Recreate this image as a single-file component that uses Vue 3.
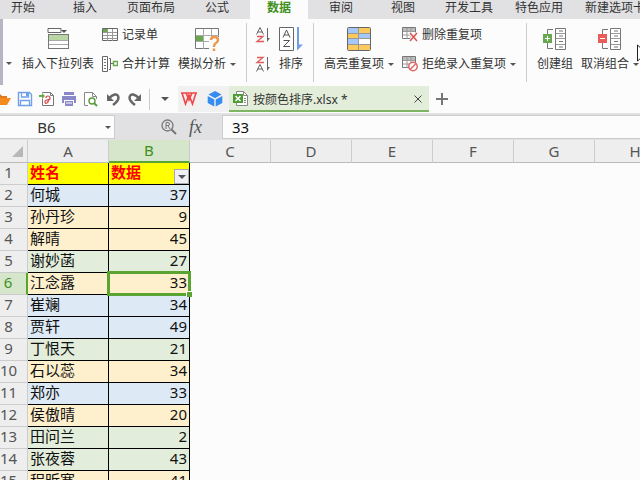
<script setup>
import { ref } from 'vue'

const tabs = ['开始', '插入', '页面布局', '公式', '数据', '审阅', '视图', '开发工具', '特色应用', '新建选项卡']
const activeTab = ref('数据')
const nameBox = ref('B6')
const formula = ref('33')
const extraColumns = ['C', 'D', 'E', 'F', 'G', 'H']
const rows = [
  { name: '何城', value: 37, tone: 'blue' },
  { name: '孙丹珍', value: 9, tone: 'amber' },
  { name: '解晴', value: 45, tone: 'amber' },
  { name: '谢妙菡', value: 27, tone: 'green' },
  { name: '江念露', value: 33, tone: 'amber' },
  { name: '崔斓', value: 34, tone: 'blue' },
  { name: '贾轩', value: 49, tone: 'blue' },
  { name: '丁恨天', value: 21, tone: 'green' },
  { name: '石以蕊', value: 34, tone: 'amber' },
  { name: '郑亦', value: 33, tone: 'blue' },
  { name: '侯傲晴', value: 20, tone: 'amber' },
  { name: '田问兰', value: 2, tone: 'green' },
  { name: '张夜蓉', value: 43, tone: 'green' },
  { name: '程昕寒', value: 41, tone: 'amber' },
]
const activeRow = 6
</script>

<template>
  <div class="app">
    <nav class="tabs">
      <button v-for="t in tabs" :key="t" class="tab" :class="{ active: t === activeTab }" @click="activeTab = t">{{ t }}</button>
    </nav>

    <section class="ribbon">
      <button class="more" aria-label="更多"><i class="caret"></i></button>

      <button class="big first">
        <svg width="22" height="24" viewBox="0 0 22 24">
          <path d="M1 1.5h13v4h-13z" fill="#fff" stroke="#666" />
          <path d="M14 3h6l-3 3z" fill="#555" />
          <rect x="1.5" y="7.500" width="20" height="14" fill="#fff" stroke="#777" />
          <path d="M2 8h19v5h-19z" fill="#b9d7a4" />
          <path d="M2 13.500h19M2 17.500h19" stroke="#aaa" />
        </svg>
        <span>插入下拉列表</span>
      </button>

      <div class="stack">
        <button class="small">
          <svg width="16" height="16" viewBox="0 0 16 16">
            <path d="M.5 1.500h15v12h-15z" fill="#fff" stroke="#666" />
            <path d="M1 2h5v3h-5z" fill="#6aa84f" />
            <path d="M1 5.500h14M1 8.500h14M1 11.500h14M5.500 2v12M10.500 2v12" stroke="#999" />
          </svg>
          <span>记录单</span>
        </button>
        <button class="small">
          <svg width="16" height="16" viewBox="0 0 16 16">
            <path d="M.5.500h5v15h-5z" fill="#fff" stroke="#666" />
            <path d="M2 3.500h2M2 6.500h2M2 9.500h2M2 12.500h2" stroke="#777" />
            <path d="M7 2.500h1.500v11H7M9 7.500h2" fill="none" stroke="#666" />
            <path d="M11.500 5.500h4v4h-4z" fill="#fff" stroke="#6aa84f" stroke-width="1.500" />
          </svg>
          <span>合并计算</span>
        </button>
      </div>

      <button class="big">
        <svg width="26" height="24" viewBox="0 0 26 24">
          <path d="M1.500 1.500h23v20h-23z" fill="#fff" stroke="#777" />
          <path d="M9.500 2v20M17.500 2v8M2 8.500h23M2 14.500h14" stroke="#aaa" />
          <path d="M2 9h7v5H2z" fill="#6aa84f" />
          <path d="M15 10h11v14H15z" fill="#fcfcfc" />
          <path d="M17 13q0-3 3.500-3t3.500 3q0 2-2 3t-2 4M20 21.500v2.500" fill="none" stroke="#eb9a50" stroke-width="2.500" />
        </svg>
        <span>模拟分析<i class="caret"></i></span>
      </button>

      <i class="divider"></i>

      <div class="stack sorts">
        <button class="small" aria-label="升序">
          <svg width="16" height="16" viewBox="0 0 16 16">
            <path d="M1.500 7.500 5 .5l3.500 7M2.500 5h5" fill="none" stroke="#666" />
            <path d="M2 9.500h6L2 14.500h7" fill="none" stroke="#e05a5a" stroke-width="1.300" />
            <path d="M12.500 1v13" stroke="#666" /><path d="M12 11h3l-3 4z" fill="#666" />
          </svg>
        </button>
        <button class="small" aria-label="降序">
          <svg width="16" height="16" viewBox="0 0 16 16">
            <path d="M2 1.500h6L2 6.500h7" fill="none" stroke="#e05a5a" stroke-width="1.300" />
            <path d="M1.500 15.500 5 8.500l3.500 7M2.500 13h5" fill="none" stroke="#666" />
            <path d="M12.500 1v13" stroke="#666" /><path d="M12 11h3l-3 4z" fill="#666" />
          </svg>
        </button>
      </div>

      <button class="big">
        <svg width="24" height="26" viewBox="0 0 24 26">
          <path d="M.5 1.500h14v23H.5z" fill="#fff" stroke="#666" />
          <path d="M4 11.500 7.500 4l3.500 7.500M5 9h5M4.500 14.500h6l-6 6h6.500" fill="none" stroke="#555" />
          <path d="M19 1v22" stroke="#6f9fe8" stroke-width="2" /><path d="M18 18.500h6l-6 6z" fill="#6f9fe8" />
        </svg>
        <span>排序</span>
      </button>

      <i class="divider"></i>

      <button class="big">
        <svg width="24" height="24" viewBox="0 0 24 24">
          <path d="M1 1h22v22H1z" fill="#a5c7fa" />
          <path d="M12 1h11v6H12zM1 7h11v5H1zM1 17h11v6H1zM12 17h11v6H12z" fill="#fcc95b" />
          <path d="M12 12h11v5H12z" fill="#fff" />
          <path d="M1 6.500h22M1 11.500h22M1 17.500h22M11.500 1v22" stroke="#999" />
          <rect x=".5" y=".5" width="23" height="23" rx="1" fill="none" stroke="#666" />
        </svg>
        <span>高亮重复项<i class="caret"></i></span>
      </button>

      <div class="stack">
        <button class="small">
          <svg width="16" height="16" viewBox="0 0 16 16">
            <path d="M.5.500h13v11H.5z" fill="#fff" stroke="#777" />
            <path d="M1 1h12v3H1z" fill="#bbb" /><path d="M1 4.500h12M1 8h12M5 1v11M9 1v11" stroke="#999" />
            <path d="M8 6l7 8M15 6l-7 8" stroke="#fff" stroke-width="3" />
            <path d="M8 6l7 8M15 6l-7 8" stroke="#d9534f" stroke-width="1.500" />
          </svg>
          <span>删除重复项</span>
        </button>
        <button class="small">
          <svg width="16" height="16" viewBox="0 0 16 16">
            <path d="M.5.500h13v11H.5z" fill="#fff" stroke="#777" />
            <path d="M1 1h12v3H1z" fill="#bbb" /><path d="M1 4.500h12M1 8h12M5 1v11M9 1v11" stroke="#999" />
            <circle cx="11" cy="10.500" r="4.200" fill="#fff" stroke="#e06666" stroke-width="1.500" />
            <path d="M8 13.500l6-6" stroke="#e06666" stroke-width="1.500" />
          </svg>
          <span>拒绝录入重复项<i class="caret"></i></span>
        </button>
      </div>

      <i class="divider"></i>

      <button class="big">
        <svg width="24" height="24" viewBox="0 0 24 24">
          <path d="M10 2.500H4.500v19H10" fill="none" stroke="#777" />
          <path d="M12.500 1.500h10v21h-10z" fill="#fff" stroke="#777" />
          <path d="M13 6.500h9M13 11.500h9M13 17.500h9" stroke="#999" />
          <path d="M16 4h4M16 9h4M16 14.500h4M16 20h4" stroke="#777" />
          <path d="M0 7h9v9H0z" fill="#6aa84f" /><path d="M2 11.500h5M4.500 9v5" stroke="#fff" />
        </svg>
        <span>创建组</span>
      </button>

      <button class="big">
        <svg width="24" height="24" viewBox="0 0 24 24">
          <path d="M10 2.500H4.500v19H10" fill="none" stroke="#777" />
          <path d="M12.500 1.500h10v21h-10z" fill="#fff" stroke="#777" />
          <path d="M13 6.500h9M13 11.500h9M13 17.500h9" stroke="#999" />
          <path d="M16 4h4M16 9h4M16 14.500h4M16 20h4" stroke="#777" />
          <path d="M0 7h9v9H0z" fill="#e85c5c" /><path d="M2 11.500h5" stroke="#fff" />
        </svg>
        <span>取消组合<i class="caret"></i></span>
      </button>

      <svg class="pointer" width="14" height="22" viewBox="0 0 14 22">
        <path d="M1.500 1v16l4-3.500 3 7 3-1-3-7h5z" fill="#fff" stroke="#222" />
      </svg>
    </section>

    <section class="quick">
      <button class="tool open" aria-label="打开">
        <svg width="16" height="16" viewBox="0 0 16 16">
          <path d="M0 3h5l2 2h5v3H4l-3 6H0z" fill="#e07a1c" /><path d="M4 7h12l-4 7H1z" fill="#f58a1f" />
        </svg>
      </button>
      <button class="tool" aria-label="保存">
        <svg width="16" height="16" viewBox="0 0 16 16">
          <path d="M1.500 1.500h11l2 2v11h-13z" fill="#fff" stroke="#6f9fe8" stroke-width="1.400" />
          <path d="M4.500 2v4h7V2M3.500 14V9.500h9V14" fill="none" stroke="#6f9fe8" stroke-width="1.300" />
          <path d="M9 2h2v3H9z" fill="#6f9fe8" />
        </svg>
      </button>
      <button class="tool" aria-label="输出为PDF">
        <svg width="16" height="16" viewBox="0 0 16 16">
          <path d="M3.500 1.500h8l3 3v10h-11z" fill="#fff" stroke="#777" />
          <path d="M11.500 1.500v3h3" fill="none" stroke="#777" />
          <path d="M7 7q0-2 2-2t2 2-2 2H8q-2 0-2 2t2 1 1-4" fill="none" stroke="#d94545" stroke-width="1.200" />
          <path d="M0 2h6v6H0z" fill="#fcfcfc" /><path d="M0 4h3V2l3 3-3 3V6H0z" fill="#6aa84f" />
        </svg>
      </button>
      <button class="tool" aria-label="打印">
        <svg width="16" height="16" viewBox="0 0 16 16">
          <path d="M3 1h10v3H3zM1 5h14v7h-2V9H3v3H1z" fill="#8a87cb" />
          <path d="M4 10h8v5H4z" fill="#8a87cb" /><path d="M5 12h6" stroke="#fff" />
        </svg>
      </button>
      <button class="tool" aria-label="打印预览">
        <svg width="16" height="16" viewBox="0 0 16 16">
          <path d="M1.500 1.500h8l4 4v9h-12z" fill="#fff" stroke="#888" /><path d="M9.500 1.500v4h4" fill="none" stroke="#888" />
          <path d="M5 8h10v7H5z" fill="#fff" />
          <circle cx="9" cy="10" r="3" fill="#fff" stroke="#5a9e3c" stroke-width="1.400" /><path d="M11 12l3 3" stroke="#5a9e3c" stroke-width="2" />
        </svg>
      </button>
      <button class="tool" aria-label="撤销">
        <svg width="16" height="16" viewBox="0 0 16 16">
          <path d="M4 7q7-6 9-2t-5 9" fill="none" stroke="#666" stroke-width="2.500" /><path d="M2 3v7h7z" fill="#666" />
        </svg>
      </button>
      <button class="tool" aria-label="恢复">
        <svg width="16" height="16" viewBox="0 0 16 16">
          <path d="M12 7q-7-6-9-2t5 9" fill="none" stroke="#666" stroke-width="2.500" /><path d="M14 3v7H7z" fill="#666" />
        </svg>
      </button>
      <i class="rule"></i>
      <button class="drop" aria-label="自定义"><i class="caret large"></i></button>
      <div class="brand">
        <a href="#" aria-label="WPS">
          <svg width="16" height="14" viewBox="0 0 16 14">
            <path d="M0 1h16M1 1l3.500 11L8 3l3.500 9L15 1M5 1l3 7 3-7" fill="none" stroke="#f04848" stroke-width="1.600" />
          </svg>
        </a>
        <a href="#" aria-label="云空间">
          <svg width="16" height="16" viewBox="0 0 16 16">
            <path d="M8 0l6.500 3.500L8 7.200 1.500 3.500zM.7 5l6.600 3.600v7L.7 12zM15.300 5L8.700 8.600v7l6.600-3.600z" fill="#378cf0" />
          </svg>
        </a>
      </div>
      <div class="doc">
        <svg width="16" height="16" viewBox="0 0 16 16">
          <path d="M3.500.500h7l4 4v10h-11z" fill="#fff" stroke="#888" /><path d="M10.500.500v4h4M11 7.500h2M11 9.500h2M11 11.500h2" fill="none" stroke="#888" />
          <path d="M0 3h10v9H0z" fill="#4d9b35" /><path d="M2.500 5l5 5M7.500 5l-5 5" stroke="#fff" stroke-width="1.500" />
        </svg>
        <span class="title">按颜色排序.xlsx *</span>
        <button class="close" aria-label="关闭">
          <svg width="8" height="8" viewBox="0 0 8 8"><path d="M.5.500l7 7M7.500.500l-7 7" stroke="#444" /></svg>
        </button>
      </div>
      <button class="plus" aria-label="新建">
        <svg width="12" height="12" viewBox="0 0 12 12"><path d="M0 6h12M6 0v12" stroke="#777" stroke-width="2" /></svg>
      </button>
    </section>

    <section class="formula-bar">
      <div class="name-box">
        <input v-model="nameBox" aria-label="名称框" />
        <i class="caret"></i>
      </div>
      <div class="fx">
        <button aria-label="查找">
          <svg width="16" height="16" viewBox="0 0 16 16">
            <circle cx="6.500" cy="6.500" r="5.500" fill="none" stroke="#777" stroke-width="1.300" />
            <path d="M10.500 10.500l4.500 4.500" stroke="#777" stroke-width="2" />
            <path d="M5 10V3.500h2q1.500 0 1.500 1.500T7 6.500H5M7 6.500L9 10" fill="none" stroke="#777" />
          </svg>
        </button>
        <button class="fn">fx</button>
      </div>
      <input v-model="formula" class="formula" aria-label="编辑栏" />
    </section>

    <main class="sheet">
      <table>
        <thead>
          <tr>
            <th class="corner"><i></i></th>
            <th class="col">A</th>
            <th class="col selected">B</th>
            <th v-for="c in extraColumns" :key="c" class="col">{{ c }}</th>
          </tr>
        </thead>
        <tbody>
          <tr>
            <th class="num">1</th>
            <td class="cell head">姓名</td>
            <td class="cell head filter">数据<button aria-label="筛选"><i class="caret large"></i></button></td>
            <td :colspan="extraColumns.length"></td>
          </tr>
          <tr v-for="(r, i) in rows" :key="i">
            <th class="num" :class="{ selected: i + 2 === activeRow }">{{ i + 2 }}</th>
            <td class="cell" :class="r.tone">{{ r.name }}</td>
            <td class="cell value" :class="[r.tone, { current: i + 2 === activeRow }]">{{ r.value }}</td>
            <td :colspan="extraColumns.length"></td>
          </tr>
        </tbody>
      </table>
    </main>
  </div>
</template>

<style>
body {
  margin: 0;
  overflow: hidden;
}
</style>

<style scoped>
.app {
  display: flex;
  flex-direction: column;
  height: 100vh;
  overflow: hidden;
  background: #fcfcfc;
  color: #333;
  font: 12px/16px "Noto Sans", "Noto Sans CJK SC", sans-serif;
}
* {
  box-sizing: border-box;
}
button,
input {
  margin: 0;
  padding: 0;
  border: 0;
  background: none;
  color: inherit;
  font: inherit;
}
svg {
  display: block;
  flex: none;
}
.caret {
  display: inline-block;
  flex: none;
  border: 3px solid transparent;
  border-top-color: #555;
  border-bottom: 0;
}
.caret.large {
  border-width: 4px;
  border-bottom: 0;
}

.tabs {
  display: flex;
  flex: none;
  height: 19px;
  margin-left: -8px;
  background: #e1e1e3;
}
.tab {
  flex: none;
  min-width: 62px;
  padding: 0 11px 3px;
  white-space: nowrap;
}
.tab.active {
  min-width: 58px;
  margin: 0 2px;
  background: #fcfcfc;
  color: #3f9020;
  font-weight: 700;
}

.ribbon {
  position: relative;
  display: flex;
  flex: none;
  height: 66px;
  padding-top: 4px;
  border-left: 3px solid #b5b5c3;
}
.ribbon button {
  flex: none;
  white-space: nowrap;
}
.more {
  display: flex;
  align-items: center;
  width: 11px;
  height: 16px;
  margin-top: 32px;
  padding-left: 3px;
}
.big {
  display: flex;
  flex-direction: column;
  align-items: center;
  height: 48px;
  margin: 3px 0 0 8px;
}
.big svg {
  height: 26px;
  margin-bottom: 4px;
}
.big span,
.small span {
  display: flex;
  align-items: center;
}
.big .caret,
.small .caret {
  margin-left: 4px;
}
.stack {
  display: flex;
  flex: none;
  flex-direction: column;
  gap: 13px;
  margin: 4px 0 0 8px;
}
.small {
  display: flex;
  align-items: center;
  gap: 4px;
  height: 16px;
}
.divider {
  flex: none;
  width: 1px;
  height: 59px;
  margin-left: 10px;
  background: #ccc;
}
.divider + .big {
  margin-left: 10px;
}
.pointer {
  position: absolute;
  top: 25px;
  right: -10px;
}

.quick {
  display: flex;
  flex: none;
  align-items: center;
  height: 28px;
}
.tool {
  flex: none;
  margin-left: 6px;
}
.tool.open {
  margin-left: -5px;
}
.rule {
  flex: none;
  width: 1px;
  height: 21px;
  margin-left: 6px;
  background: #ccc;
}
.drop {
  display: flex;
  justify-content: center;
  width: 28px;
  padding-left: 2px;
}
.brand {
  display: flex;
  flex: none;
  align-items: center;
  gap: 10px;
  height: 26px;
  padding: 0 6px 0 3px;
  background: #f1f1f2;
}
.doc {
  display: flex;
  flex: 0 1 200px;
  align-items: center;
  height: 26px;
  padding: 1px 7px 0 4px;
  border-bottom: 2px solid #7db562;
  background: #e2eeda;
}
.title {
  flex: 1;
  padding: 2px 0 0 4px;
  white-space: nowrap;
}
.plus {
  margin-left: 7px;
}

.formula-bar {
  display: flex;
  flex: none;
  height: 27px;
  padding: 2px 0 1px;
  background: #e1e1e3;
}
.name-box {
  display: flex;
  flex: none;
  align-items: center;
  width: 115px;
  padding-right: 3px;
  border: 1px solid #ccc;
  border-left: 0;
  background: #fcfcfc;
}
.name-box input {
  flex: 1;
  min-width: 0;
  padding-right: 12px;
  font-size: 15px;
  text-align: center;
}
.fx {
  display: flex;
  flex: none;
  align-items: center;
  justify-content: flex-end;
  gap: 12px;
  width: 107px;
  padding-right: 20px;
}
.fn {
  color: #555;
  font: italic 18px/20px "Liberation Serif", serif;
}
.formula {
  flex: 1;
  min-width: 0;
  padding-left: 9px;
  border: 1px solid #ccc;
  border-right: 0;
  background: #fcfcfc;
  color: #111;
  font-size: 15px;
}

.sheet {
  flex: 1;
  min-height: 0;
  overflow: hidden;
}
table {
  width: 676px;
  border-collapse: separate;
  border-spacing: 0;
  table-layout: fixed;
}
th,
td {
  height: 22px;
  padding: 0 0 2px;
  font-size: 15px;
  line-height: 19px;
  white-space: nowrap;
}
th {
  color: #555;
  font-weight: 400;
}
thead th {
  height: 23px;
  padding: 0;
  border-right: 1px solid #ccc;
  border-bottom: 1px solid #bbb;
  background: #eee;
}
.corner {
  width: 28px;
}
.corner i {
  display: block;
  width: 0;
  margin-left: 12px;
  border-bottom: 11px solid #b8b8b8;
  border-left: 11px solid transparent;
}
.col {
  width: 81px;
}
th.selected {
  background: #d5e6cb;
  color: #3f9020;
}
.col.selected {
  border-bottom: 2px solid #5aa532;
}
.num {
  padding-right: 10px;
  border-right: 1px solid #ccc;
  border-bottom: 1px solid #ccc;
  background: #eee;
}
.num.selected {
  border-right: 2px solid #5aa532;
}
.cell {
  padding-left: 2px;
  border-right: 1px solid #000;
  border-bottom: 1px solid #000;
  color: #111;
}
.head {
  background: #ff0;
  color: #f00;
  font-weight: 700;
}
.filter {
  position: relative;
}
.filter button {
  position: absolute;
  right: 0;
  bottom: 0;
  display: flex;
  align-items: center;
  justify-content: center;
  width: 15px;
  height: 15px;
  border: 1px solid #aaa;
  background: #efeff5;
}
.value {
  padding-right: 2px;
  text-align: right;
}
.blue {
  background: #dde9f5;
}
.amber {
  background: #fff0cd;
}
.green {
  background: #e2eedb;
}
.current {
  position: relative;
}
.current::before {
  position: absolute;
  inset: -2px;
  border: 3px solid #5aa532;
  content: "";
}
.current::after {
  position: absolute;
  right: -3px;
  bottom: -3px;
  width: 5px;
  height: 5px;
  border: 1px solid #fcfcfc;
  border-width: 1px 0 0 1px;
  background: #5aa532;
  content: "";
}
</style>
